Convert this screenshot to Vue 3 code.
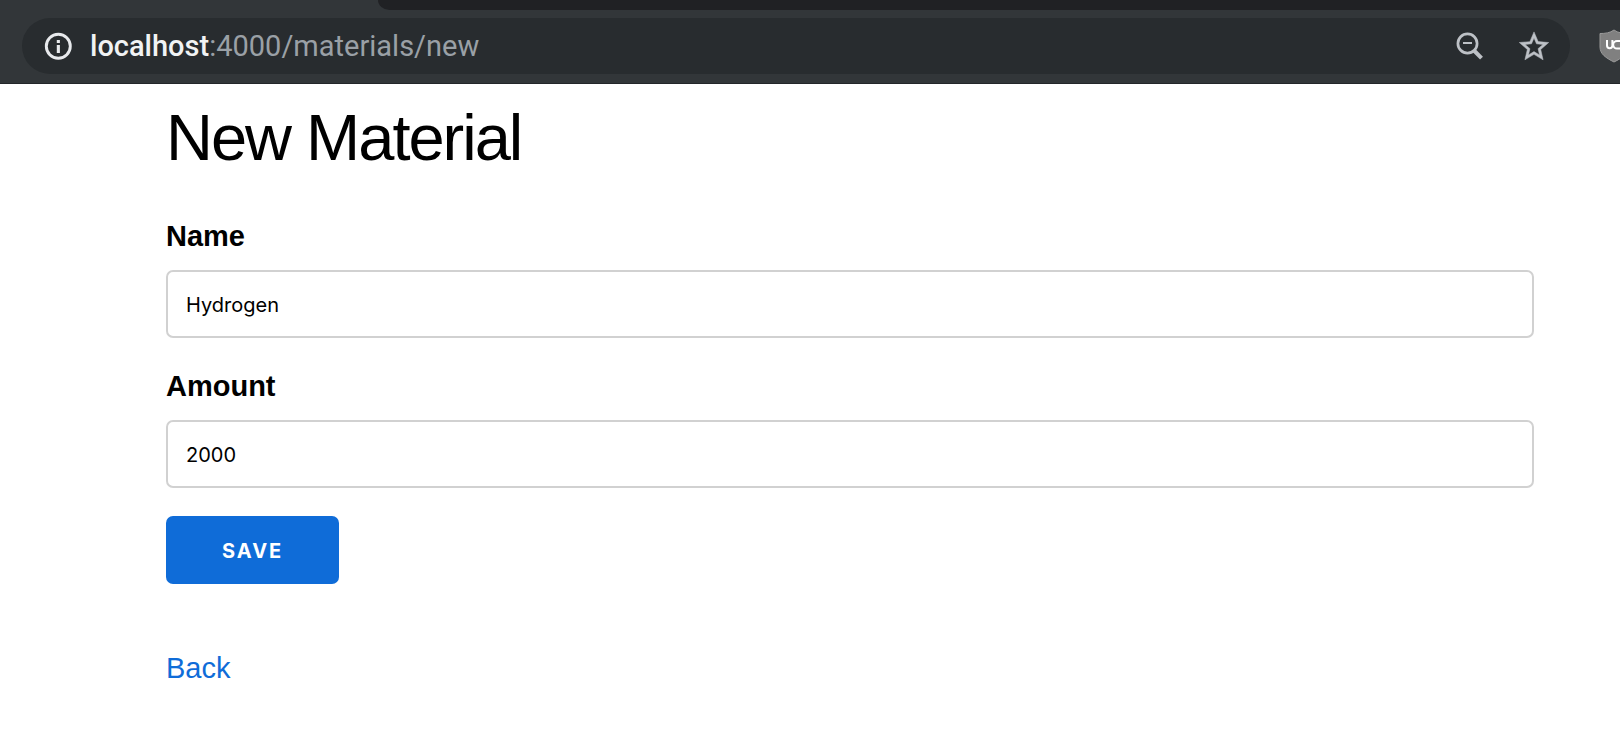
<script setup>
import { ref } from 'vue'

const name = ref('Hydrogen')
const amount = ref('2000')
</script>

<template>
  <div class="window">
    <header class="chrome">
      <div class="tabstrip"></div>
      <div class="toolbar">
        <div class="omnibox">
          <button class="icon-button" type="button" aria-label="Site information">
            <svg width="28" height="28" viewBox="0 0 28 28">
              <circle cx="14.3" cy="14.3" r="12" fill="none" stroke="#e8eaed" stroke-width="2.9" />
              <path d="M12.8 8h3.1v3h-3.1zM12.8 13h3.1v8h-3.1z" fill="#e8eaed" />
            </svg>
          </button>
          <div class="url"><span class="host">localhost</span>:4000/materials/new</div>
          <button class="icon-button zoom" type="button" aria-label="Zoom out">
            <svg width="28" height="28" viewBox="0 0 28 28">
              <circle cx="11.5" cy="11.5" r="9.6" fill="none" stroke="#bdc1c6" stroke-width="2.7" />
              <path d="M7 10h9v2H7z" fill="#bdc1c6" />
              <path d="M18 18.5l7.5 7.7" fill="none" stroke="#bdc1c6" stroke-width="4" />
            </svg>
          </button>
          <button class="icon-button" type="button" aria-label="Bookmark this page">
            <svg width="30" height="30" viewBox="1.8 1.4 20.4 20.4">
              <path
                fill="#bdc1c6"
                stroke="#bdc1c6"
                stroke-width="0.35"
                d="M22 9.24l-7.19-.62L12 2 9.19 8.63 2 9.24l5.46 4.73L5.82 21 12 17.27 18.18 21l-1.63-7.03L22 9.24zM12 15.4l-3.76 2.27 1-4.28-3.32-2.88 4.38-.38L12 6.1l1.71 4.04 4.38.38-3.32 2.88 1 4.28L12 15.4z"
              />
            </svg>
          </button>
        </div>
        <button class="extension" type="button" aria-label="Content blocker">
          <svg width="30" height="34" viewBox="0 0 30 34">
            <path
              d="M15 1C11 4 6 4.500 1 4.500v13.500c0 7 6 11 14 15 8-4 14-8 14-15V4.500C24 4.500 19 4 15 1z"
              fill="#808080"
              stroke="#9a9a9a"
            />
            <path
              d="M8 11v5.500a2.700 2.700 0 0 0 5.400 0v-5.500M22 12h-4a3.800 3.800 0 0 0 0 7.600h4z"
              fill="none"
              stroke="#fff"
              stroke-width="2"
            />
          </svg>
        </button>
      </div>
    </header>

    <main class="page">
      <h1>New Material</h1>
      <form @submit.prevent>
        <label for="material-name">Name</label>
        <input id="material-name" v-model="name" type="text" />
        <label for="material-amount">Amount</label>
        <input id="material-amount" v-model="amount" type="text" inputmode="numeric" />
        <button class="save" type="submit">Save</button>
      </form>
      <a class="back" href="#">Back</a>
    </main>
  </div>
</template>

<style>
body {
  margin: 0;
  background: #fff;
}
</style>

<style scoped>
.window {
  overflow: hidden;
  color: #000;
  font-family: "Liberation Sans", sans-serif;
}

.chrome {
  background: #323639;
  border-bottom: 1px solid #232629;
}

.tabstrip {
  height: 10px;
  margin-left: 378px;
  background: #202124;
  border-bottom-left-radius: 16px 14px;
}

.toolbar {
  display: flex;
  align-items: center;
  padding: 8px 0 9px 22px;
}

.omnibox {
  flex: 1;
  display: flex;
  align-items: center;
  box-sizing: border-box;
  height: 56px;
  padding: 0 21px 0 22px;
  border-radius: 28px;
  background: #282c2f;
}

.icon-button,
.extension {
  display: flex;
  flex: none;
  padding: 0;
  border: 0;
  background: none;
}

.url {
  flex: 1;
  margin-left: 18px;
  color: #9aa0a6;
  font-family: Roboto, sans-serif;
  font-size: 29px;
  line-height: 36px;
  white-space: nowrap;
}

.host {
  color: #f1f3f4;
  font-weight: 500;
}

.zoom {
  margin-right: 35px;
}

.extension {
  margin: 0 -9px 0 29px;
}

.page {
  padding: 18px 86px 48px 166px;
}

h1 {
  margin: 0 0 42px;
  font-size: 65px;
  font-weight: 300;
  line-height: 72px;
  letter-spacing: -2px;
}

label {
  display: block;
  margin-bottom: 13px;
  font-size: 29px;
  font-weight: 700;
  line-height: 41px;
}

input {
  display: block;
  box-sizing: border-box;
  width: 100%;
  height: 68px;
  margin: 0 0 28px;
  padding: 2px 18px 0;
  border: 2px solid #d1d1d1;
  border-radius: 7px;
  outline: 0;
  background: #fff;
  color: #000;
  font-family: Inter, sans-serif;
  font-size: 20px;
}

.save {
  display: block;
  height: 68px;
  margin: 0 0 64px;
  padding: 2px 56px 0;
  border: 0;
  border-radius: 7px;
  background: #0f6cd8;
  color: #fff;
  font-family: Inter, sans-serif;
  font-size: 20px;
  font-weight: 700;
  letter-spacing: 2px;
  text-transform: uppercase;
}

.back {
  color: #0f6cd8;
  font-size: 29px;
  font-weight: 300;
  line-height: 40px;
  text-decoration: none;
}
</style>
